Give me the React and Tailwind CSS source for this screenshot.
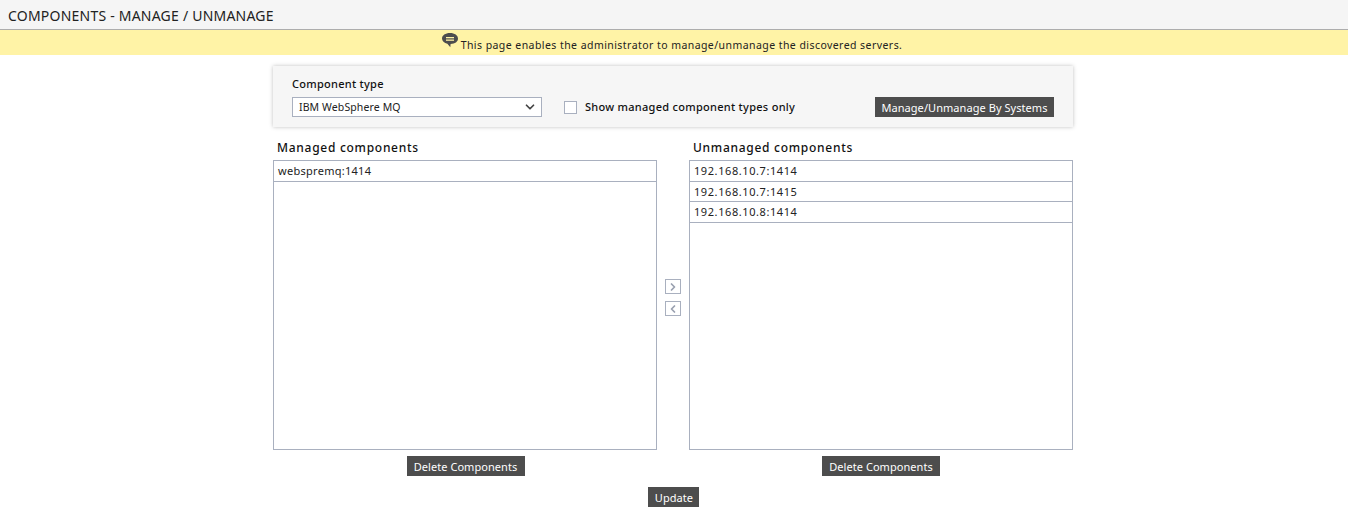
import { ChevronDown, ChevronLeft, ChevronRight } from "lucide-react";

const FONT = "font-['Noto_Sans',sans-serif]";

function DarkButton({ children, className = "" }) {
  return (
    <button className={`h-5 bg-[#4d4d4d] text-white text-[11px] leading-[22px] tracking-[0.06px] whitespace-nowrap ${className}`}>
      {children}
    </button>
  );
}

function ListPanel({ title, items, rowClass, buttonClass = "" }) {
  return (
    <div className="w-[384px] flex flex-col items-stretch">
      <h2 className="h-[33px] pl-1 pt-[13px] text-[12px] leading-4 font-medium tracking-[0.72px] text-[#111]">{title}</h2>
      <div className="h-[290px] border border-[#a9b0bf] bg-white">
        {items.map((item) => (
          <div key={item} className={`h-[20.5px] border-b border-[#a9b0bf] pl-1 text-[11px] leading-5 text-[#222] ${rowClass}`}>
            {item}
          </div>
        ))}
      </div>
      <DarkButton className={`mt-1.5 self-center w-[118px] ${buttonClass}`}>Delete Components</DarkButton>
    </div>
  );
}

export default function App() {
  return (
    <div className={`${FONT} w-[1348px] h-[515px] overflow-hidden bg-white`}>
      <div className="h-[30px] bg-[#f5f5f5] border-b border-[#adadad] pl-2 text-[14px] leading-[31px] tracking-[0.22px] text-[#222]">
        COMPONENTS - MANAGE / UNMANAGE
      </div>
      <div className="h-[25px] bg-[#fff3a6] flex justify-center pr-[5px] text-[10.5px] tracking-[0.44px] text-[#222]">
        <svg width="18" height="17" viewBox="0 0 18 17" className="mt-[3px] mr-[2px]">
          <path d="M9 0C4.400 0 1 2.300 1 5.600c0 2.600 2.200 4.600 5.400 5.200l2.900 3.400.3-3.100C14 11 17 8.800 17 5.600 17 2.300 13.600 0 9 0z" fill="#4d4d4d" />
          <rect x="5" y="4" width="8" height="1.300" fill="#fff3a6" />
          <rect x="5" y="6.500" width="8" height="1.300" fill="#fff3a6" />
        </svg>
        <span className="leading-[31px]">This page enables the administrator to manage/unmanage the discovered servers.</span>
      </div>

      <div className="w-[800px] ml-[273px] mt-[11px]">
        <div className="h-[61px] bg-[#f6f6f6] shadow-[0_0_4px_rgba(0,0,0,0.25)] pl-[19px] pr-[19px] flex items-end pb-[10px]">
          <div>
            <label className="block text-[11px] leading-4 font-medium tracking-[0.27px] text-[#111] mb-[5px]">Component type</label>
            <div className="w-[250px] h-5 border border-[#a9b0bf] bg-white flex items-center justify-between pl-[6px] pr-[4px] text-[10.5px] tracking-[0.12px] text-[#222]">
              <span className="pt-[2px]">IBM WebSphere MQ</span>
              <ChevronDown size={14} strokeWidth={3} className="text-[#444]" />
            </div>
          </div>
          <div className="ml-[22px] h-5 flex items-center">
            <span className="w-[13px] h-[13px] border border-[#a9b0bf] bg-white" />
            <span className="ml-2 pt-[1px] text-[11px] font-medium tracking-[0.28px] text-[#111]">Show managed component types only</span>
          </div>
          <DarkButton className="ml-auto w-[179px]">Manage/Unmanage By Systems</DarkButton>
        </div>

        <div className="flex">
          <ListPanel title="Managed components" items={["webspremq:1414"]} rowClass="tracking-[0.28px]" buttonClass="ml-[1px]" />
          <div className="w-8 flex flex-col items-center pt-[152px] gap-[7px]">
            <span className="w-4 h-[15px] border border-[#a9b0bf] flex items-center justify-center">
              <ChevronRight size={12} strokeWidth={3.5} className="text-[#9aa1b0]" />
            </span>
            <span className="w-4 h-[15px] border border-[#a9b0bf] flex items-center justify-center">
              <ChevronLeft size={12} strokeWidth={3.5} className="text-[#9aa1b0]" />
            </span>
          </div>
          <ListPanel title="Unmanaged components" items={["192.168.10.7:1414", "192.168.10.7:1415", "192.168.10.8:1414"]} rowClass="tracking-[0.58px]" />
        </div>

        <div className="flex justify-center mt-[11px]">
          <DarkButton className="w-[51px] pl-[2px]">Update</DarkButton>
        </div>
      </div>
    </div>
  );
}
